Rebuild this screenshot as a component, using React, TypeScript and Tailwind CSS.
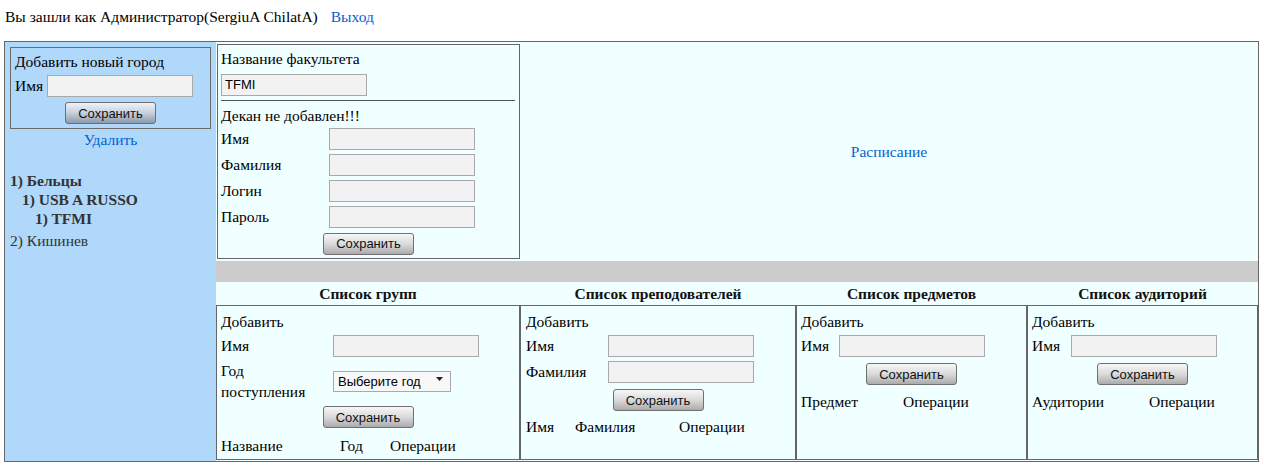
import { useState } from "react"

const serif = "font-['Liberation_Serif','Times_New_Roman',serif]"
const sans = "font-['Liberation_Sans',Arial,sans-serif]"

const Field = ({ value = "", w = "w-[146px]" }: { value?: string; w?: string }) => (
  <input
    defaultValue={value}
    className={`${w} h-[22px] border border-[#a9a9a9] bg-[#f2f2f2] px-[3px] text-[13px] text-black outline-none ${sans}`}
  />
)

const SaveButton = ({ blue = false }: { blue?: boolean }) => (
  <button
    className={`w-[91px] h-[22px] border border-[#707070] rounded-[3px] text-[13px] leading-none text-[#111] bg-gradient-to-b ${
      blue ? "from-[#eef3f9] via-[#c6d0dc] to-[#8d9aab]" : "from-[#f7f7f7] via-[#dadada] to-[#ababab]"
    } ${sans}`}
  >
    Сохранить
  </button>
)

const Box = ({ w, children, pl = "pl-[4px]" }: { w: string; children: React.ReactNode; pl?: string }) => (
  <div className={`${w} h-[155px] border border-[#666] ${pl} flex flex-col`}>{children}</div>
)

const App = () => {
  const [year, setYear] = useState("")

  return (
    <div className={`w-[1264px] h-[470px] bg-white text-[15.5px] text-black ${serif}`}>
      <div className="h-[41px] pt-[9px] pl-[5px] leading-[16px]">
        Вы зашли как Администратор(SergiuA ChilatA)
        <a href="#" className="ml-[13px] text-[#0063d1]">Выход</a>
      </div>

      <div className="ml-[4px] w-[1255px] h-[421px] border border-[#666] flex">
        {/* left: cities */}
        <div className="w-[211px] bg-[#b0d8fa] px-[5px] pt-[5px]">
          <div className="w-[201px] h-[82px] border border-[#6b6b6b] pl-[4px] pt-[4px]">
            <div className="h-[20px] flex items-center">Добавить новый город</div>
            <div className="mt-[2px] h-[24px] flex items-center gap-[4px]">
              <span>Имя</span>
              <Field />
            </div>
            <div className="mt-[4px] flex justify-center pr-[4px]">
              <SaveButton blue />
            </div>
          </div>
          <div className="mt-[1px] h-[20px] flex items-center justify-center">
            <a href="#" className="text-[#0063d1]">Удалить</a>
          </div>
          <div className="mt-[21px] text-[#333]">
            <div className="h-[19px] flex items-center font-bold">1) Бельцы</div>
            <div className="h-[19px] flex items-center font-bold pl-[12px]">1) USB A RUSSO</div>
            <div className="h-[19px] flex items-center font-bold pl-[25px]">1) TFMI</div>
            <div className="mt-[3px] h-[19px] flex items-center">2) Кишинев</div>
          </div>
        </div>

        {/* right: faculty */}
        <div className="w-[1042px] bg-[#f0ffff] flex flex-col">
          <div className="pt-[2px] flex">
            <div className="ml-[1px] w-[303px] h-[215px] border border-[#666] pl-[3px] pt-[4px]">
              <div className="h-[20px] flex items-center">Название факультета</div>
              <div className="mt-[3px]">
                <Field value="TFMI" />
              </div>
              <div className="mt-[4px] mr-[4px] border-t border-[#555]" />
              <div className="mt-[5px] h-[20px] flex items-center">Декан не добавлен!!!</div>
              {["Имя", "Фамилия", "Логин", "Пароль"].map(l => (
                <div key={l} className="h-[26px] flex items-center">
                  <span className="w-[108px]">{l}</span>
                  <Field />
                </div>
              ))}
              <div className="mt-[3px] flex justify-center pr-[3px]">
                <SaveButton />
              </div>
            </div>
            <div className="flex-1 flex items-center justify-center">
              <a href="#" className="text-[#0063d1]">Расписание</a>
            </div>
          </div>

          <div className="mt-[2px] h-[21px] bg-[#cccccc]" />

          <div className="h-[23px] flex font-bold text-[#111]">
            <div className="w-[304px] flex items-center justify-center">Список групп</div>
            <div className="w-[276px] flex items-center justify-center">Список преподователей</div>
            <div className="w-[231px] flex items-center justify-center">Список предметов</div>
            <div className="w-[231px] flex items-center justify-center">Список аудиторий</div>
          </div>

          <div className="flex">
            <Box w="w-[304px]">
              <div className="mt-[5px] h-[22px] flex items-center">Добавить</div>
              <div className="h-[26px] flex items-center">
                <span className="w-[112px]">Имя</span>
                <Field />
              </div>
              <div className="h-[44px] flex items-center">
                <span className="w-[112px] leading-[21px]">
                  Год
                  <br />
                  поступления
                </span>
                <div className="relative">
                  <select
                    value={year}
                    onChange={e => setYear(e.target.value)}
                    className={`appearance-none w-[118px] h-[21px] border border-[#a9a9a9] bg-[#f8f8f8] pl-[4px] text-[13px] text-black outline-none ${sans}`}
                  >
                    <option value="">Выберите год</option>
                    <option value="2012">2012</option>
                    <option value="2013">2013</option>
                  </select>
                  <svg className="absolute right-[8px] top-[8px] pointer-events-none" width="7" height="4" viewBox="0 0 7 4">
                    <path d="M0 0h7L3.5 4z" fill="#222" />
                  </svg>
                </div>
              </div>
              <div className="mt-[3px] flex justify-center pr-[4px]">
                <SaveButton />
              </div>
              <div className="mt-[8px] h-[20px] flex items-center">
                <span className="w-[119px]">Название</span>
                <span className="w-[50px]">Год</span>
                <span>Операции</span>
              </div>
            </Box>

            <Box w="w-[276px]" pl="pl-[5px]">
              <div className="mt-[5px] h-[22px] flex items-center">Добавить</div>
              <div className="h-[26px] flex items-center">
                <span className="w-[82px]">Имя</span>
                <Field />
              </div>
              <div className="h-[26px] flex items-center">
                <span className="w-[82px]">Фамилия</span>
                <Field />
              </div>
              <div className="mt-[4px] flex justify-center pr-[5px]">
                <SaveButton />
              </div>
              <div className="mt-[6px] h-[20px] flex items-center">
                <span className="w-[49px]">Имя</span>
                <span className="w-[104px]">Фамилия</span>
                <span>Операции</span>
              </div>
            </Box>

            <Box w="w-[231px]">
              <div className="mt-[5px] h-[22px] flex items-center">Добавить</div>
              <div className="h-[26px] flex items-center">
                <span className="w-[38px]">Имя</span>
                <Field />
              </div>
              <div className="mt-[4px] flex justify-center pr-[4px]">
                <SaveButton />
              </div>
              <div className="mt-[7px] h-[20px] flex items-center">
                <span className="w-[102px]">Предмет</span>
                <span>Операции</span>
              </div>
            </Box>

            <Box w="w-[231px]">
              <div className="mt-[5px] h-[22px] flex items-center">Добавить</div>
              <div className="h-[26px] flex items-center">
                <span className="w-[39px]">Имя</span>
                <Field />
              </div>
              <div className="mt-[4px] flex justify-center pr-[4px]">
                <SaveButton />
              </div>
              <div className="mt-[7px] h-[20px] flex items-center">
                <span className="w-[117px]">Аудитории</span>
                <span>Операции</span>
              </div>
            </Box>
          </div>
        </div>
      </div>
    </div>
  )
}

export default App
